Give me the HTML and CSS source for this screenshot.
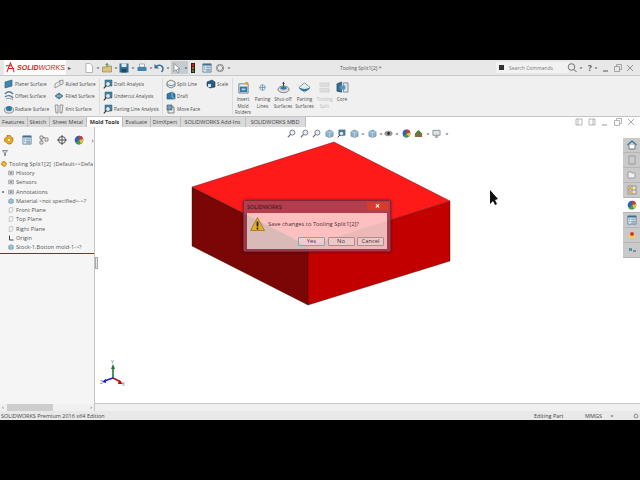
FILE: index.html
```html
<!DOCTYPE html>
<html lang="en">
<head>
  <meta charset="UTF-8" />
  <title>SOLIDWORKS</title>
  <link rel="stylesheet" href="styles.css">
</head>
<body>

  <!-- shared icons -->
  <svg class="defs" width="0" height="0">
    <symbol id="i-planar" viewBox="0 0 10 10"><path d="M1 3 8 1v6L1 9z" fill="#3f86ad" stroke="#1f5a7c" stroke-width=".6"/></symbol>
    <symbol id="i-offset" viewBox="0 0 10 10"><path d="M1 3c2-3 6-3 8 0M1 6c2-2 6-2 8 1" fill="none" stroke="#4d7f9c" stroke-width="1.4"/><path d="M2 8c2-1 5-1 7 1" fill="none" stroke="#777" stroke-width=".8"/></symbol>
    <symbol id="i-radiate" viewBox="0 0 10 10"><ellipse cx="5" cy="6" rx="4.6" ry="3.2" fill="#ddd" stroke="#666" stroke-width=".6"/><ellipse cx="5" cy="4.5" rx="3" ry="2.6" fill="#2f7ca6"/></symbol>
    <symbol id="i-ruled" viewBox="0 0 10 10"><path d="M1 5 6 2v4L1 9zM5 2l4-1v4L6 6" fill="#eee" stroke="#777" stroke-width=".7"/></symbol>
    <symbol id="i-filled" viewBox="0 0 10 10"><path d="M1 5 5 2l4 3-4 3z" fill="#3c83a8" stroke="#666" stroke-width=".7"/><path d="M3 5h4" stroke="#fff" stroke-width=".7"/></symbol>
    <symbol id="i-knit" viewBox="0 0 10 10"><path d="M1 1h3v8H2zM6 1h3L8 9H6z" fill="#e8e8e8" stroke="#777" stroke-width=".7"/></symbol>
    <symbol id="i-analysis" viewBox="0 0 10 10"><path d="M2 1h7v6H2z" fill="#3f86ad" stroke="#1f5a7c" stroke-width=".5"/><circle cx="5" cy="5" r="2.4" fill="#dfeef5" stroke="#444" stroke-width=".7"/><path d="M3 7 .8 9.3" stroke="#333" stroke-width="1.1"/></symbol>
    <symbol id="i-split" viewBox="0 0 10 10"><path d="M1 3 5 1l4 2v4L5 9 1 7z" fill="#eee" stroke="#555" stroke-width=".7"/><path d="M1 5c3 2 5 2 8 0" fill="none" stroke="#2f7ca6" stroke-width=".8"/></symbol>
    <symbol id="i-draft" viewBox="0 0 10 10"><path d="M1 3 6 1l3 2v5L1 8z" fill="#2f7ca6" stroke="#174e6e" stroke-width=".6"/><path d="M6 1v5l3 2" fill="none" stroke="#cde" stroke-width=".6"/></symbol>
    <symbol id="i-move" viewBox="0 0 10 10"><path d="M2 3h6v6H2z" fill="#eee" stroke="#555" stroke-width=".7"/><path d="M1 1h5v5H1z" fill="#6aa2c0" stroke="#444" stroke-width=".6"/></symbol>
    <symbol id="i-scale" viewBox="0 0 10 10"><path d="M1 3 6 1l3 2v5L4 9 1 7z" fill="#215f86" stroke="#123" stroke-width=".5"/><path d="M2 5h3v3H2z" fill="#dde"/></symbol>
    <symbol id="i-folder" viewBox="0 0 14 14"><path d="M2 3h10v10H2z" fill="#e6eef2" stroke="#456" stroke-width=".7"/><path d="M3 6h8v6H3z" fill="#2f7ca6"/><path d="M5 8h4v2H5z" fill="#bcd"/><path d="M9 1h3v3H9z" fill="#e8a12a"/></symbol>
    <symbol id="i-lines" viewBox="0 0 14 14"><path d="M4 7a3 3 0 0 1 6 0 3 3 0 0 1-6 0z" fill="#e6eef2" stroke="#6a93ab" stroke-width=".8"/><path d="M7 4v6M4 7h6" stroke="#6a93ab" stroke-width=".9"/></symbol>
    <symbol id="i-shutoff" viewBox="0 0 14 14"><ellipse cx="7" cy="9" rx="6" ry="3.6" fill="#d8d8d8" stroke="#555" stroke-width=".7"/><ellipse cx="7" cy="7.6" rx="3.4" ry="1.8" fill="#2f7ca6"/><path d="M7 1v5" stroke="#333" stroke-width="1"/><path d="M5.5 3 7 1l1.500 2z" fill="#333"/></symbol>
    <symbol id="i-psurf" viewBox="0 0 14 14"><path d="M1 7 7 2l6 5-6 5z" fill="#e6eef2" stroke="#666" stroke-width=".7"/><path d="M1 7c4 2 8 2 12 0-1 3-4 4-6 4s-5-1-6-4z" fill="#2f7ca6"/></symbol>
    <symbol id="i-tooling" viewBox="0 0 14 14"><path d="M2 2h10v4H2zM2 8h10v4H2z" fill="#ddd" stroke="#ccc" stroke-width=".6"/></symbol>
    <symbol id="i-core" viewBox="0 0 14 14"><path d="M1 3 6 1v11l-5-1z" fill="#2f6f98" stroke="#234" stroke-width=".6"/><path d="M8 2h5v10H8z" fill="#d8e2e8" stroke="#456" stroke-width=".6"/><path d="M4 5h6v4H4z" fill="#5a93b5"/></symbol>
    <symbol id="i-part" viewBox="0 0 10 10"><path d="M3 0h3l1 2 2 1v3l-2 3H4L2 7 0 6l1-3 2-1z" fill="#e8a61e" stroke="#7c5a10" stroke-width=".5"/><path d="M4 4h2v2H4z" fill="#fff2c4"/></symbol>
    <symbol id="i-list" viewBox="0 0 12 12"><path d="M1 1h10v10H1z" fill="#dfe8ee" stroke="#3f6f8d" stroke-width=".8"/><path d="M1 1h10v2H1z" fill="#3f6f8d"/><path d="M2.500 5h1.500M2.500 7.500h1.500M5 5h5M5 7.500h5M5 9.500h5" stroke="#3f6f8d" stroke-width=".8"/></symbol>
    <symbol id="i-ball" viewBox="0 0 12 12"><circle cx="6" cy="6" r="5.200" fill="#2f62b5"/><path d="M6 6V.8a5.200 5.200 0 0 1 5 4z" fill="#d8362a"/><path d="M6 6l5-1.200a5.200 5.200 0 0 1-3 6z" fill="#e9c22b"/><path d="M6 6l2 4.800a5.200 5.200 0 0 1-6-1z" fill="#42a23c"/></symbol>
    <symbol id="i-plane" viewBox="0 0 10 10"><path d="M3 1h5v6l-2 2H2V3z" fill="#f4f4f4" stroke="#8a8a8a" stroke-width=".7"/></symbol>
    <symbol id="i-node" viewBox="0 0 10 10"><path d="M1 2h8v6H1z" fill="#dfe3e6" stroke="#667" stroke-width=".8"/><path d="M3 4h4v2H3z" fill="#667"/></symbol>
    <symbol id="i-zoom" viewBox="0 0 10 10"><circle cx="6" cy="4" r="2.800" fill="#e7f0f5" stroke="#667" stroke-width=".9"/><path d="M4 6 1 9" stroke="#667" stroke-width="1.300"/></symbol>
    <symbol id="i-cube" viewBox="0 0 10 10"><path d="M1 3 5 1l4 2v5L5 9.500 1 8z" fill="#8db4cb" stroke="#5c7f94" stroke-width=".6"/><path d="M5 4v5.500M1 3l4 1 4-1" fill="none" stroke="#dbe8ef" stroke-width=".6"/></symbol>
    <symbol id="i-caret" viewBox="0 0 4 4"><path d="M.5 1.500h3L2 3z" fill="#555"/></symbol>
  </svg>

  <div class="app">

    <div class="titlebar">
      <div class="logo"><svg class="logo-mark" viewBox="0 0 12 12"><path d="M2 11 6 1l4 10M3 7h7M1 4h6" fill="none" stroke="#d8231f" stroke-width="1.100"/></svg><span class="logo-s">SOLID</span><span class="logo-w">WORKS</span></div>
      <span class="logo-arrow">&#9656;</span>

      <div class="quick">
        <span class="quick-btn"><svg class="ico10" viewBox="0 0 10 10"><path d="M2 .5h4l2.500 2.500v6.500H2z" fill="#fff" stroke="#999" stroke-width=".7"/></svg><svg class="caret"><use href="#i-caret"/></svg></span>
        <span class="quick-btn"><svg class="ico10" viewBox="0 0 10 10"><path d="M.5 4h3l1-1h5v6H.5z" fill="#d9c27a" stroke="#8a7a44" stroke-width=".6"/><path d="M5 4V.5M3.500 2 5 .5 6.500 2" fill="none" stroke="#3b8f3b" stroke-width="1"/></svg><svg class="caret"><use href="#i-caret"/></svg></span>
        <span class="quick-btn"><svg class="ico10" viewBox="0 0 10 10"><path d="M.5.500h9v9h-9z" fill="#2f6f98"/><path d="M2.500.5h5v3.500h-5z" fill="#dfe8ee"/><path d="M2.500 6h5v3.500h-5z" fill="#1d4a68"/></svg><svg class="caret"><use href="#i-caret"/></svg></span>
        <span class="quick-btn"><svg class="ico10" viewBox="0 0 10 10"><path d="M2.500 1h5v3h-5z" fill="#fff" stroke="#777" stroke-width=".6"/><path d="M.5 4h9v4h-9z" fill="#3f86ad"/></svg><svg class="caret"><use href="#i-caret"/></svg></span>
        <span class="quick-btn"><svg class="ico10" viewBox="0 0 10 10"><path d="M2 4c2-3 7-2 7 2 0 1-.5 2-1.500 3" fill="none" stroke="#2f6f98" stroke-width="1.500"/><path d="M.5 1v4.500H5z" fill="#2f6f98"/></svg><svg class="caret"><use href="#i-caret"/></svg></span>
        <span class="quick-btn quick-on"><svg class="ico10" viewBox="0 0 10 10"><path d="M2 .5v8l2-2 1.500 3 1.500-.7L5.500 6h2.500z" fill="#fff" stroke="#666" stroke-width=".6"/></svg><svg class="caret"><use href="#i-caret"/></svg></span>
        <span class="quick-btn quick-light"><svg class="ico10" viewBox="0 0 10 10"><path d="M3 0h4v10H3z" fill="#222"/><circle cx="5" cy="2" r="1.200" fill="#d8231f"/><circle cx="5" cy="5" r="1.200" fill="#b5651d"/><circle cx="5" cy="8" r="1.200" fill="#3b8f3b"/></svg></span>
        <span class="quick-btn quick-short"><svg class="ico10"><use href="#i-list"/></svg></span>
        <span class="quick-btn"><svg class="ico10" viewBox="0 0 10 10"><circle cx="5" cy="5" r="3" fill="none" stroke="#888" stroke-width="1.800" stroke-dasharray="1.300 .6"/><circle cx="5" cy="5" r="3.800" fill="none" stroke="#888" stroke-width=".5"/></svg><svg class="caret"><use href="#i-caret"/></svg></span>
      </div>

      <div class="doc-title">Tooling Split1[2] *</div>

      <div class="search">
        <span class="search-mark"></span>
        <span>Search Commands</span>
      </div>
      <div class="win-btns">
        <svg class="ico10" viewBox="0 0 10 10"><circle cx="4.500" cy="4" r="3.300" fill="none" stroke="#555" stroke-width=".8"/><path d="M7 6.500 9.500 9" stroke="#555" stroke-width=".9"/></svg>
        <svg class="caret"><use href="#i-caret"/></svg>
        <span class="help">?</span>
        <svg class="caret"><use href="#i-caret"/></svg>
        <svg class="win-ico" viewBox="0 0 8 8"><path d="M1 7h5" stroke="#555"/></svg>
        <svg class="win-ico" viewBox="0 0 8 8"><path d="M.5 2.500h5v5h-5zM2.500 2.500v-2h5v5h-2" fill="none" stroke="#888" stroke-width=".7"/></svg>
        <svg class="win-ico" viewBox="0 0 8 8"><path d="M1 1l6 6M7 1 1 7" stroke="#777" stroke-width=".8"/></svg>
      </div>
    </div>

    <div class="ribbon">
      <div class="rib-group rib-first">
        <div class="rib-col w51">
          <div class="rib-item"><svg class="ico10"><use href="#i-planar"/></svg>Planer Surface</div>
          <div class="rib-item"><svg class="ico10"><use href="#i-offset"/></svg>Offset Surface</div>
          <div class="rib-item"><svg class="ico10"><use href="#i-radiate"/></svg>Radiate Surface</div>
        </div>
        <div class="rib-col w45">
          <div class="rib-item"><svg class="ico10"><use href="#i-ruled"/></svg>Ruled Surface</div>
          <div class="rib-item"><svg class="ico10"><use href="#i-filled"/></svg>Filled Surface</div>
          <div class="rib-item"><svg class="ico10"><use href="#i-knit"/></svg>Knit Surface</div>
        </div>
      </div>
      <div class="rib-group">
        <div class="rib-col w60">
          <div class="rib-item"><svg class="ico10"><use href="#i-analysis"/></svg>Draft Analysis</div>
          <div class="rib-item"><svg class="ico10"><use href="#i-analysis"/></svg>Undercut Analysis</div>
          <div class="rib-item"><svg class="ico10"><use href="#i-analysis"/></svg>Parting Line Analysis</div>
        </div>
      </div>
      <div class="rib-group">
        <div class="rib-col w40">
          <div class="rib-item"><svg class="ico10"><use href="#i-split"/></svg>Split Line</div>
          <div class="rib-item"><svg class="ico10"><use href="#i-draft"/></svg>Draft</div>
          <div class="rib-item"><svg class="ico10"><use href="#i-move"/></svg>Move Face</div>
        </div>
        <div class="rib-col w27">
          <div class="rib-item"><svg class="ico10"><use href="#i-scale"/></svg>Scale</div>
        </div>
      </div>
      <div class="rib-big-group">
        <div class="rib-big w20"><svg class="ico13"><use href="#i-folder"/></svg>Insert<br>Mold<br>Folders</div>
        <div class="rib-big w19"><svg class="ico13"><use href="#i-lines"/></svg>Parting<br>Lines</div>
        <div class="rib-big w22"><svg class="ico13"><use href="#i-shutoff"/></svg>Shut-off<br>Surfaces</div>
        <div class="rib-big w21"><svg class="ico13"><use href="#i-psurf"/></svg>Parting<br>Surfaces</div>
        <div class="rib-big w19 rib-off"><svg class="ico13"><use href="#i-tooling"/></svg>Tooling<br>Split</div>
        <div class="rib-big w16"><svg class="ico13"><use href="#i-core"/></svg>Core</div>
      </div>
    </div>

    <div class="tabrow">
      <div class="tabs">
        <span class="tab t27">Features</span>
        <span class="tab t22">Sketch</span>
        <span class="tab t38">Sheet Metal</span>
        <span class="tab t36 tab-on">Mold Tools</span>
        <span class="tab t27">Evaluate</span>
        <span class="tab t30">DimXpert</span>
        <span class="tab t65">SOLIDWORKS Add-Ins</span>
        <span class="tab t60">SOLIDWORKS MBD</span>
      </div>
      <div class="view-btns">
        <svg class="win-ico" viewBox="0 0 8 8"><path d="M1 1h6v6H1zM3 1v6" fill="none" stroke="#999" stroke-width=".7"/></svg>
        <svg class="win-ico" viewBox="0 0 8 8"><path d="M1 1h6v6H1zM5 1v6" fill="none" stroke="#999" stroke-width=".7"/></svg>
        <svg class="win-ico" viewBox="0 0 8 8"><path d="M1 7h5" stroke="#999"/></svg>
        <svg class="win-ico" viewBox="0 0 8 8"><path d="M.5 2.500h5v5h-5zM2.500 2.500v-2h5v5h-2" fill="none" stroke="#999" stroke-width=".7"/></svg>
        <svg class="win-ico" viewBox="0 0 8 8"><path d="M1 1l6 6M7 1 1 7" stroke="#999" stroke-width=".8"/></svg>
      </div>
    </div>

    <div class="main">
      <div class="panel">
        <div class="panel-grip"></div>
        <div class="panel-tabs">
          <svg class="ico10 pt"><use href="#i-part"/></svg>
          <svg class="ico10 pt"><use href="#i-list"/></svg>
          <svg class="ico10 pt" viewBox="0 0 10 10"><path d="M1 1h3v3H1zM6 3h3v3H6zM1 6h3v3H1zM4 2.500h2M2.500 4v2" fill="#eee" stroke="#666" stroke-width=".7"/></svg>
          <svg class="ico10 pt" viewBox="0 0 10 10"><circle cx="5" cy="5" r="3.500" fill="none" stroke="#333" stroke-width=".8"/><path d="M5 0v10M0 5h10" stroke="#333" stroke-width=".8"/></svg>
          <svg class="ico10 pt"><use href="#i-ball"/></svg>
          <span class="pt-more">&#8250;</span>
        </div>
        <div class="filter"><svg class="ico6" viewBox="0 0 6 6"><path d="M.5.500h5L3.500 3v2.500h-1V3z" fill="#cfe0ea" stroke="#456" stroke-width=".6"/></svg></div>
        <ul class="tree">
          <li class="root"><svg class="ico6"><use href="#i-part"/></svg>Tooling Split1[2]&nbsp; (Default&lt;&lt;Defa</li>
          <li><svg class="ico6"><use href="#i-node"/></svg>History</li>
          <li><svg class="ico6"><use href="#i-node"/></svg>Sensors</li>
          <li class="has-kids"><svg class="ico6"><use href="#i-node"/></svg>Annotations</li>
          <li><svg class="ico6"><use href="#i-cube"/></svg>Material &lt;not specified&gt;-&gt;?</li>
          <li><svg class="ico6"><use href="#i-plane"/></svg>Front Plane</li>
          <li><svg class="ico6"><use href="#i-plane"/></svg>Top Plane</li>
          <li><svg class="ico6"><use href="#i-plane"/></svg>Right Plane</li>
          <li><svg class="ico6" viewBox="0 0 6 6"><path d="M1.500.500v4.500h4" fill="none" stroke="#333" stroke-width=".9"/></svg>Origin</li>
          <li><svg class="ico6"><use href="#i-cube"/></svg>Stock-1.Botton mold-1-&gt;?</li>
        </ul>
        <div class="rollback"></div>
        <div class="panel-scroll">
          <span>&#8249;</span>
          <div class="thumb"></div>
          <span>&#8250;</span>
        </div>
      </div>

      <div class="right">
        <div class="canvas">
          <svg class="model" viewBox="95 127 545 276">
            <polygon points="334,142 450,201 308,246 192,187" fill="#ff1a1a"/>
            <polygon points="192,187 308,246 308,305 192,246" fill="#7a0606"/>
            <polygon points="308,246 450,201 450,261 308,305" fill="#c20000"/>
            <path d="M334 142 450 201 450 261 308 305 192 246 192 187z M192 187 308 246 450 201 M308 246V305" fill="none" stroke="#3a0a0a" stroke-width=".4"/>
            <!-- triad -->
            <path d="M113 378V367" stroke="#1f7a3a" stroke-width="1.600"/>
            <path d="M111 369 113 364l2 5z" fill="#1f7a3a"/>
            <path d="M113 378 104 381" stroke="#1c1cc8" stroke-width="1.600"/>
            <path d="M106 379 102 382l4 1z" fill="#1c1cc8"/>
            <path d="M113 378 121 382" stroke="#b01212" stroke-width="1.600"/>
            <path d="M119 380 123 384l-5 0z" fill="#b01212"/>
            <text x="111" y="364" class="axis" fill="#3c8c5a">Y</text>
            <text x="100" y="384" class="axis" fill="#6a6ac0">Z</text>
            <text x="122" y="386" class="axis" fill="#b06060">X</text>
            <!-- cursor -->
            <path d="M490 190V204L493 201 495 205 497 204 495 200 498 199z" fill="#111"/>
          </svg>

          <div class="headsup">
            <svg class="ico9"><use href="#i-zoom"/></svg>
            <svg class="ico9"><use href="#i-zoom"/></svg>
            <svg class="ico9"><use href="#i-zoom"/></svg>
            <svg class="ico9"><use href="#i-cube"/></svg>
            <svg class="ico9"><use href="#i-analysis"/></svg>
            <svg class="ico9"><use href="#i-cube"/></svg>
            <svg class="caret hs-gap"><use href="#i-caret"/></svg>
            <svg class="ico9"><use href="#i-cube"/></svg>
            <svg class="caret hs-gap hs-tight"><use href="#i-caret"/></svg>
            <svg class="ico9" viewBox="0 0 10 10"><ellipse cx="5" cy="5" rx="4.500" ry="3" fill="#999"/><circle cx="5" cy="5" r="1.600" fill="#333"/></svg>
            <svg class="caret hs-gap"><use href="#i-caret"/></svg>
            <svg class="ico9"><use href="#i-ball"/></svg>
            <svg class="ico9" viewBox="0 0 10 10"><path d="M5 1 9 5v4H1V5z" fill="#8a6a3a"/><circle cx="5" cy="4" r="2" fill="#3b8f3b"/></svg>
            <svg class="caret hs-gap"><use href="#i-caret"/></svg>
            <svg class="ico9" viewBox="0 0 10 10"><path d="M1 1.500h8v5.500H1z" fill="#dde3e6" stroke="#666" stroke-width=".7"/><path d="M3 9h4M5 7v2" stroke="#666" stroke-width=".8"/></svg>
            <svg class="caret"><use href="#i-caret"/></svg>
          </div>

          <div class="dialog">
            <div class="dlg-title">
              <span>SOLIDWORKS</span>
              <span class="dlg-close">&#215;</span>
            </div>
            <div class="dlg-body">
              <div class="dlg-msg">
                <svg class="warn" viewBox="0 0 15 14"><path d="M7.500 .5 14.500 13.500H.5z" fill="#e2ac2c" stroke="#8b6a1c" stroke-width=".7"/><path d="M7.500 4.500v5" stroke="#222" stroke-width="1.800"/><circle cx="7.500" cy="11.500" r="1" fill="#222"/></svg>
                <span>Save changes to Tooling Split1[2]?</span>
              </div>
              <div class="dlg-btns">
                <span class="dlg-btn dlg-default">Yes</span>
                <span class="dlg-btn">No</span>
                <span class="dlg-btn">Cancel</span>
              </div>
            </div>
          </div>

          <div class="taskpane">
            <div class="task"><svg class="ico10" viewBox="0 0 10 10"><path d="M.5 5 5 1l4.500 4" fill="none" stroke="#2f6f98" stroke-width="1.100"/><path d="M2 5v4h6V5" fill="#fff" stroke="#555" stroke-width=".7"/></svg></div>
            <div class="task"><svg class="ico10" viewBox="0 0 10 10"><path d="M2 1h6v8H2z" fill="#ddd" stroke="#888" stroke-width=".8"/><path d="M4 1v8M6 1v8" stroke="#999" stroke-width=".5"/></svg></div>
            <div class="task"><svg class="ico10" viewBox="0 0 10 10"><path d="M1 2h3l1 1h3v5H1z" fill="#eee" stroke="#888" stroke-width=".7"/></svg></div>
            <div class="task"><svg class="ico10" viewBox="0 0 10 10"><path d="M1 1h8v8H1z" fill="#f0e6c0" stroke="#667" stroke-width=".6"/><path d="M1 5h8M5 1v8" stroke="#667" stroke-width=".6"/><path d="M2 2h2v2H2zM2 6h2v2H2z" fill="#e8a61e"/></svg></div>
            <div class="task task-on"><svg class="ico10"><use href="#i-ball"/></svg></div>
            <div class="task"><svg class="ico10"><use href="#i-list"/></svg></div>
            <div class="task"><svg class="ico10" viewBox="0 0 10 10"><path d="M2 4h6v4H2z" fill="#f0d25a"/><circle cx="5" cy="4" r="2" fill="#d8362a"/></svg></div>
            <div class="task"><svg class="ico10" viewBox="0 0 10 10"><path d="M2 3h3v3H2z" fill="#5a8fb0"/><path d="M6 5h3v2H6z" fill="#889"/></svg></div>
          </div>

          <div class="splitter"></div>
        </div>
        <div class="hscroll"></div>
      </div>
    </div>

    <div class="statusbar">
      <span class="st-edition">SOLIDWORKS Premium 2016 x64 Edition</span>
      <span class="st-mode">Editing Part</span>
      <span class="st-units">MMGS</span>
      <svg class="caret st-caret"><use href="#i-caret"/></svg>
      <svg class="ico6 st-gear" viewBox="0 0 10 10"><circle cx="5" cy="5" r="3" fill="none" stroke="#777" stroke-width="2" stroke-dasharray="1.300 .6"/></svg>
    </div>
  </div>

</body>
</html>
```

FILE: styles.css
```css
html, body {
  margin: 0;
  padding: 0;
  height: 100%;
  background-color: #000;
  font-family: "Open Sans", "Noto Sans", sans-serif;
  color: #444;
  overflow: hidden;
}

.defs {
  position: absolute;
}

svg {
  display: block;
  flex: none;
}

.ico6 { width: 6px; height: 6px; }
.ico9 { width: 9px; height: 9px; }
.ico10 { width: 10px; height: 10px; }
.ico13 { width: 13px; height: 13px; }
.caret { width: 4px; height: 4px; }
.win-ico { width: 8px; height: 8px; }

.app {
  margin-top: 60px;
  height: 360px;
  display: flex;
  flex-direction: column;
  background-color: #f0f0f0;
}

/* title bar */
.titlebar {
  height: 16px;
  flex: none;
  display: flex;
  align-items: center;
  background-color: #e8e8e8;
  border-bottom: 1px solid #c8c8c8;
  box-sizing: border-box;
}

.titlebar > * {
  flex: none;
}

.logo {
  width: 62px;
  height: 15px;
  margin-left: 4px;
  display: flex;
  align-items: center;
  justify-content: center;
  background-color: #fbfbfb;
  font-family: "Liberation Sans", sans-serif;
  font-size: 7px;
  font-style: italic;
  font-weight: 700;
  color: #d8231f;
}

.logo-mark {
  width: 11px;
  height: 11px;
  margin-right: 1px;
}

.logo-w {
  font-weight: 400;
}

.logo-arrow {
  width: 13px;
  padding-left: 2px;
  box-sizing: border-box;
  font-size: 6px;
  color: #555;
}

.quick {
  display: flex;
  align-items: center;
  margin-left: 5px;
}

.quick-btn {
  width: 17.500px;
  height: 13px;
  display: flex;
  align-items: center;
  gap: 2px;
}

.quick-short {
  width: 13px;
}

.quick-light {
  width: 14px;
}

.quick-on {
  margin-left: -1px;
  padding-left: 1px;
  box-sizing: border-box;
  background-color: #c4ccd2;
}

.doc-title {
  margin-left: 107.500px;
  width: 60px;
  font-size: 5px;
  color: #555;
}

.search {
  width: 73px;
  height: 11px;
  margin-left: 96px;
  display: flex;
  align-items: center;
  gap: 5px;
  padding-left: 3px;
  box-sizing: border-box;
  background-color: #f2f2f2;
  font-size: 5px;
  color: #777;
}

.search-mark {
  width: 5px;
  height: 5px;
  background-color: #333;
}

.win-btns {
  display: flex;
  align-items: center;
  gap: 2px;
  margin-left: -2px;
}

.help {
  margin-left: 3px;
  font-size: 8px;
  font-weight: 700;
  color: #555;
}

.win-btns .win-ico {
  margin-left: 2px;
}

/* ribbon */
.ribbon {
  height: 41px;
  flex: none;
  display: flex;
  box-sizing: border-box;
  padding-top: 2px;
  background-color: #f0f0f0;
  border-bottom: 1px solid #c4c4c4;
}

.rib-group {
  display: flex;
  height: 37px;
  padding-left: 3px;
  border-right: 1px solid #dcdcdc;
}

.rib-first {
  padding-left: 4px;
  width: 100px;
  box-sizing: border-box;
}

.rib-col {
  display: flex;
  flex-direction: column;
}

.w51 { width: 51px; }
.w45 { width: 45px; }
.w60 { width: 59px; }
.w40 { width: 40px; }
.w27 { width: 26px; }
.w20 { width: 20px; }
.w19 { width: 19px; }
.w22 { width: 22px; }
.w21 { width: 21px; }
.w16 { width: 16px; }

.rib-item {
  height: 12.500px;
  display: flex;
  align-items: center;
  gap: 1px;
  font-size: 4.700px;
  color: #4c4c4c;
  white-space: nowrap;
}

.rib-big-group {
  display: flex;
}

.rib-big {
  display: flex;
  flex-direction: column;
  align-items: center;
  font-size: 4.700px;
  line-height: 6.500px;
  color: #4c4c4c;
  text-align: center;
  white-space: nowrap;
}

.rib-big svg {
  margin: 3px 0 2px;
}

.rib-off {
  color: #bbb;
}

/* tabs */
.tabrow {
  height: 10px;
  flex: none;
  display: flex;
  justify-content: space-between;
  background-color: #fff;
}

.tabs {
  display: flex;
  background-color: #dadada;
}

.tab {
  display: flex;
  align-items: center;
  justify-content: center;
  box-sizing: border-box;
  border-right: 1px solid #bdbdbd;
  font-size: 5.500px;
  color: #444;
  white-space: nowrap;
}

.t22 { width: 22px; }
.t27 { width: 27.500px; }
.t30 { width: 30px; }
.t36 { width: 36px; }
.t38 { width: 37.500px; }
.t60 { width: 60px; }
.t65 { width: 65px; }

.tab-on {
  background-color: #fff;
  font-weight: 700;
  color: #333;
}

.view-btns {
  display: flex;
  align-items: center;
  gap: 5px;
  padding-right: 5px;
}

/* feature manager */
.main {
  flex: 1;
  min-height: 0;
  display: flex;
}

.panel {
  width: 95px;
  flex: none;
  box-sizing: border-box;
  display: flex;
  flex-direction: column;
  background-color: #f5f5f5;
  border-right: 1px solid #c4c4c4;
}

.panel-grip {
  height: 5px;
}

.panel-tabs {
  height: 16px;
  display: flex;
  align-items: center;
  padding-left: 4px;
}

.panel-tabs .pt {
  margin-right: 7.500px;
}

.pt-more {
  font-size: 7px;
}

.filter {
  height: 9px;
  display: flex;
  align-items: center;
  padding-left: 2px;
}

.tree {
  list-style: none;
  margin: 2px 0 0;
  padding: 0;
  font-size: 5.600px;
  color: #555;
}

.tree li {
  height: 9.300px;
  display: flex;
  align-items: center;
  gap: 2px;
  padding-left: 8px;
  white-space: nowrap;
}

.tree li.root {
  padding-left: 1px;
}

.tree li.has-kids {
  position: relative;
}

.tree li.has-kids::before {
  content: "";
  position: absolute;
  left: 2px;
  width: 2px;
  height: 2px;
  background-color: #888;
}

.rollback {
  height: 1px;
  margin-top: 1px;
  background-color: #1f4e79;
}

.panel-scroll {
  height: 7px;
  margin-top: auto;
  display: flex;
  align-items: center;
  justify-content: space-between;
  padding: 0 2px;
  font-size: 6px;
  line-height: 7px;
  color: #333;
  background-color: #f0f0f0;
}

.thumb {
  width: 46px;
  height: 7px;
  margin-right: 34px;
  background-color: #cdcdcd;
}

/* graphics area */
.right {
  flex: 1;
  min-width: 0;
  display: flex;
  flex-direction: column;
}

.canvas {
  flex: 1;
  position: relative;
  background-color: #fff;
  border-bottom: 1px solid #c8c8c8;
}

.hscroll {
  height: 7px;
  background-color: #f0f0f0;
}

.model {
  position: absolute;
  left: 0;
  top: 0;
  width: 545px;
  height: 276px;
}

.axis {
  font-family: "Open Sans", sans-serif;
  font-size: 5px;
}

.headsup {
  position: absolute;
  left: 192px;
  top: 2px;
  display: flex;
  align-items: center;
  gap: 3.500px;
}

.hs-gap {
  margin: 0 -1px;
}

.hs-tight {
  margin-right: -3px;
}

.dialog {
  position: absolute;
  left: 148px;
  top: 73px;
  width: 148px;
  height: 52px;
  box-sizing: border-box;
  display: flex;
  flex-direction: column;
  border: 1px solid #7a2a3a;
  border-radius: 2px;
  box-shadow: 0 0 3px rgba(40, 0, 0, 0.6);
}

.dlg-title {
  height: 12px;
  flex: none;
  box-sizing: border-box;
  padding: 0 2px 0 3px;
  display: flex;
  align-items: center;
  justify-content: space-between;
  background-color: rgba(160, 70, 90, 0.8);
  font-size: 5.500px;
  color: #2a1015;
}

.dlg-close {
  width: 21px;
  height: 8px;
  margin-top: -3px;
  background-color: #d83a2c;
  color: #fff;
  font-size: 8px;
  font-weight: 700;
  line-height: 8px;
  text-align: center;
}

.dlg-body {
  flex: 1;
  display: flex;
  flex-direction: column;
  box-sizing: border-box;
  padding: 4px 3px 3px;
  border: solid rgba(160, 70, 90, 0.8);
  border-width: 0 3px 2px;
  background-color: rgba(255, 255, 255, 0.72);
  background-clip: padding-box;
  font-size: 5.800px;
  color: #4a3035;
}

.dlg-msg {
  display: flex;
  align-items: center;
  gap: 3px;
}

.warn {
  width: 15px;
  height: 14px;
}

.dlg-btns {
  margin-top: auto;
  display: flex;
  justify-content: flex-end;
  gap: 2.500px;
}

.dlg-btn {
  width: 27px;
  height: 9px;
  box-sizing: border-box;
  background-color: rgba(235, 215, 215, 0.55);
  border: 1px solid #b08a8e;
  border-radius: 1px;
  line-height: 7px;
  text-align: center;
}

.dlg-default {
  border-color: #7fa6b4;
}

.taskpane {
  position: absolute;
  right: 0;
  top: 11px;
  width: 17px;
  display: flex;
  flex-direction: column;
}

.task {
  height: 15px;
  display: flex;
  align-items: center;
  justify-content: center;
  background-color: #c9c9c9;
  border-bottom: 1px solid #b5b5b5;
  box-sizing: border-box;
}

.task-on {
  background-color: #fff;
}

.splitter {
  position: absolute;
  left: 0;
  top: 130px;
  width: 3px;
  height: 12px;
  background-color: #e6e6e6;
  border: 1px solid #aaa;
  box-sizing: border-box;
}

/* status bar */
.statusbar {
  height: 9px;
  flex: none;
  display: flex;
  align-items: center;
  background-color: #e9e9e9;
  font-size: 5.500px;
  color: #444;
  white-space: nowrap;
}

.st-edition {
  width: 534px;
  padding-left: 1px;
  box-sizing: border-box;
  flex: none;
}

.st-mode {
  width: 51px;
  flex: none;
}

.st-units {
  width: 25px;
  flex: none;
}

.st-caret {
  margin-right: 19px;
}
```
